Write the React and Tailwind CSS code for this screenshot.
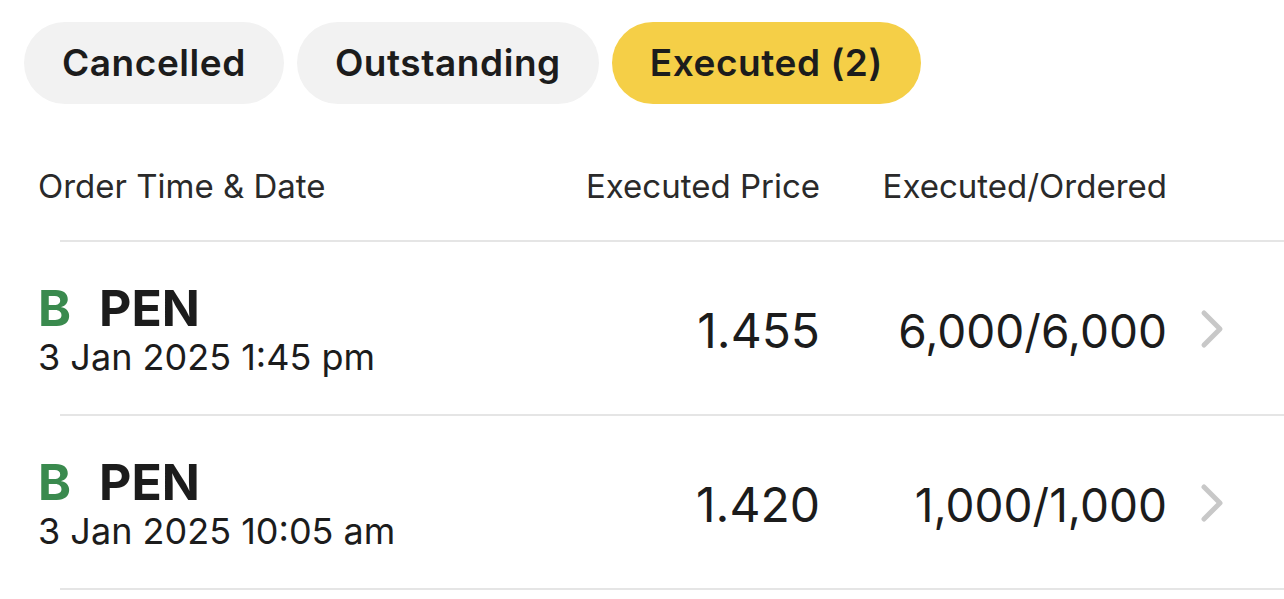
const TABS = [
  { label: "Cancelled", active: false },
  { label: "Outstanding", active: false },
  { label: "Executed (2)", active: true },
];

const ORDERS = [
  { side: "B", code: "PEN", time: "3 Jan 2025 1:45 pm", price: "1.455", qty: "6,000/6,000" },
  { side: "B", code: "PEN", time: "3 Jan 2025 10:05 am", price: "1.420", qty: "1,000/1,000" },
];

function Chevron() {
  return (
    <svg width="26" height="40" viewBox="0 0 26 40" fill="none" stroke="#c8c8c8" strokeWidth="5" strokeLinecap="round" strokeLinejoin="round">
      <path d="M5 4 L21 20 L5 36" />
    </svg>
  );
}

export default function App() {
  return (
    <div className="w-[1284px] h-[599px] bg-white overflow-hidden text-[#1c1c1c] font-['Inter','Liberation_Sans',sans-serif]">
      {/* filtre sekmeleri */}
      <div className="flex gap-[13px] pl-[24px] pt-[22px]">
        {TABS.map((t) => (
          <div
            key={t.label}
            className={
              "h-[82px] px-[38px] rounded-full flex items-center text-[37px] font-semibold tracking-[0.55px] " +
              (t.active ? "bg-[#f5cf47]" : "bg-[#f2f2f2]")
            }
          >
            {t.label}
          </div>
        ))}
      </div>

      <div className="flex items-center pl-[38px] h-[136px] pt-[30px] text-[33px] text-[#2a2a2a]">
        <div className="flex-1">Order Time &amp; Date</div>
        <div className="text-right">Executed Price</div>
        <div className="w-[347px] text-right">Executed/Ordered</div>
        <div className="w-[117px]" />
      </div>

      {ORDERS.map((o, i) => (
        <div key={i}>
          <div className="ml-[60px] border-t-2 border-[#e5e5e5]" />
          <div className="flex items-center pl-[38px] h-[172px]">
            <div className="flex-1 flex flex-col">
              <div className="flex items-baseline gap-[28px] text-[50px] font-bold leading-[58px]">
                <span className="text-[#3a8a4e]">{o.side}</span>
                <span>{o.code}</span>
              </div>
              <div className="text-[36px] leading-[40px]">{o.time}</div>
            </div>
            <div className="text-right text-[48px] mt-[6px]">{o.price}</div>
            <div className="w-[347px] text-right text-[46px] mt-[6px]">{o.qty}</div>
            <div className="w-[117px] pl-[32px] flex items-center mt-[2px]">
              <Chevron />
            </div>
          </div>
        </div>
      ))}
      <div className="ml-[60px] border-t-2 border-[#e5e5e5]" />
    </div>
  );
}
